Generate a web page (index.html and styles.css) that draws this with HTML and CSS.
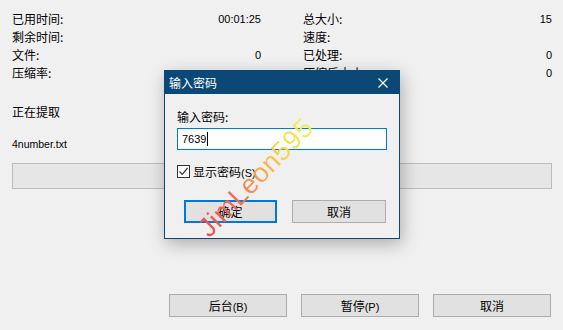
FILE: index.html
```html
<!DOCTYPE html>
<html lang="zh-CN">

<head>
    <meta charset="UTF-8">
    <title>正在提取</title>
    <link rel="stylesheet" href="styles.css">
</head>

<body>
    <!-- MAIN WINDOW -->
    <div class="window">
        <div class="stats">
            <div class="stat"><span>已用时间:</span><span class="num">00:01:25</span></div>
            <div class="stat"><span>总大小:</span><span class="num">15</span></div>
            <div class="stat"><span>剩余时间:</span><span class="num"></span></div>
            <div class="stat"><span>速度:</span><span class="num"></span></div>
            <div class="stat"><span>文件:</span><span class="num">0</span></div>
            <div class="stat"><span>已处理:</span><span class="num">0</span></div>
            <div class="stat"><span>压缩率:</span><span class="num"></span></div>
            <div class="stat"><span>压缩后大小:</span><span class="num">0</span></div>
        </div>

        <p class="status">正在提取</p>
        <p class="file">4number.txt</p>

        <div class="progress"></div>

        <!-- BUTTONS -->
        <div class="actions">
            <button class="btn">后台<span class="num">(B)</span></button>
            <button class="btn">暂停<span class="num">(P)</span></button>
            <button class="btn">取消</button>
        </div>
    </div>

    <!-- PASSWORD DIALOG -->
    <div class="dialog">
        <div class="dlg-title">
            <span>输入密码</span>
            <svg class="dlg-close" width="10" height="10" viewBox="0 0 10 10">
                <path d="M0.5 0.5 L9.5 9.5 M9.5 0.5 L0.5 9.5" stroke="#fff" stroke-width="1.2" fill="none" />
            </svg>
        </div>
        <div class="dlg-body">
            <p class="dlg-label">输入密码:</p>
            <div class="pwd-input"><span class="num">7639</span><span class="caret"></span></div>
            <div class="check-row">
                <span class="checkbox">
                    <svg width="11" height="11" viewBox="0 0 11 11">
                        <path d="M1.5 5.5 L4.2 8.3 L9.6 2" stroke="#333" stroke-width="1.2" fill="none" />
                    </svg>
                </span>
                <span>显示密码<span class="num">(S)</span></span>
            </div>
            <div class="dlg-actions">
                <button class="btn btn-ok">确定</button>
                <button class="btn btn-cancel">取消</button>
            </div>
        </div>
    </div>

    <span class="watermark">JimLeon595</span>
</body>

</html>
```

FILE: styles.css
```css
/* RESET */
* {
    margin: 0;
    padding: 0;
    box-sizing: border-box;
}

body {
    background-color: #F0F0F0;
    color: #000;
    font-family: "Noto Sans CJK SC", "Noto Sans", sans-serif;
    font-size: 12px;
    width: 563px;
    height: 330px;
    overflow: hidden;
}

.num {
    font-family: "Liberation Sans", Arial, sans-serif;
    font-size: 11px;
}

/* MAIN WINDOW */
.window {
    padding: 10px 11px 0 12px;
}

.stats {
    display: grid;
    grid-template-columns: 249px 249px;
    column-gap: 42px;
}

.stat {
    display: flex;
    justify-content: space-between;
    align-items: center;
    height: 18px;
    line-height: 18px;
}

.status {
    margin-top: 21px;
    line-height: 18px;
}

.file {
    margin-top: 15px;
    line-height: 16px;
    font-family: "Liberation Sans", Arial, sans-serif;
    font-size: 10.5px;
}

.progress {
    margin-top: 11px;
    width: 540px;
    height: 26px;
    border: 1px solid #BCBCBC;
    background-color: #E6E6E6;
}

.actions {
    display: flex;
    justify-content: flex-end;
    gap: 14px;
    margin-top: 105px;
    margin-right: 1px;
}

.btn {
    width: 118px;
    height: 23px;
    border: 1px solid #ADADAD;
    background-color: #E1E1E1;
    font-family: "Noto Sans CJK SC", "Noto Sans", sans-serif;
    font-size: 12px;
    color: #000;
}

/* DIALOG */
.dialog {
    position: absolute;
    left: 164px;
    top: 70px;
    width: 236px;
    height: 169px;
    border: 1px solid #0C4876;
    background-color: #F0F0F0;
    box-shadow: 2px 5px 16px rgba(0, 0, 0, 0.28);
}

.dlg-title {
    display: flex;
    justify-content: space-between;
    align-items: center;
    height: 23px;
    padding: 0 11px 0 4px;
    background-color: #0C4876;
    color: #FFF;
}

.dlg-body {
    padding: 14px 0 0 12px;
}

.dlg-label {
    line-height: 18px;
}

.pwd-input {
    display: flex;
    align-items: center;
    margin-top: 2px;
    width: 210px;
    height: 22px;
    padding-left: 4px;
    border: 1px solid #0078D7;
    background-color: #FFF;
}

.caret {
    width: 1px;
    height: 14px;
    margin-left: 1px;
    background-color: #000;
}

.check-row {
    display: flex;
    align-items: center;
    gap: 3px;
    margin-top: 12px;
    height: 18px;
}

.checkbox {
    display: flex;
    align-items: center;
    justify-content: center;
    width: 13px;
    height: 13px;
    border: 1px solid #333;
    background-color: #FFF;
}

.dlg-actions {
    display: flex;
    gap: 15px;
    margin-top: 20px;
    margin-left: 7px;
}

.dlg-actions .btn {
    width: 93px;
}

.btn-ok {
    border: 2px solid #0078D7;
}

.btn-cancel {
    width: 94px !important;
}

/* WATERMARK */
.watermark {
    position: absolute;
    left: 256px;
    top: 178px;
    transform: translate(-50%, -50%) rotate(-46deg);
    white-space: nowrap;
    font-family: "Liberation Sans", Arial, sans-serif;
    font-size: 27px;
    letter-spacing: 0.5px;
    background: linear-gradient(90deg, #F04C4C 0%, #F26A55 30%, #F7A84A 55%, #F6D848 75%, #EEF25C 100%);
    -webkit-background-clip: text;
    background-clip: text;
    color: transparent;
}
```
